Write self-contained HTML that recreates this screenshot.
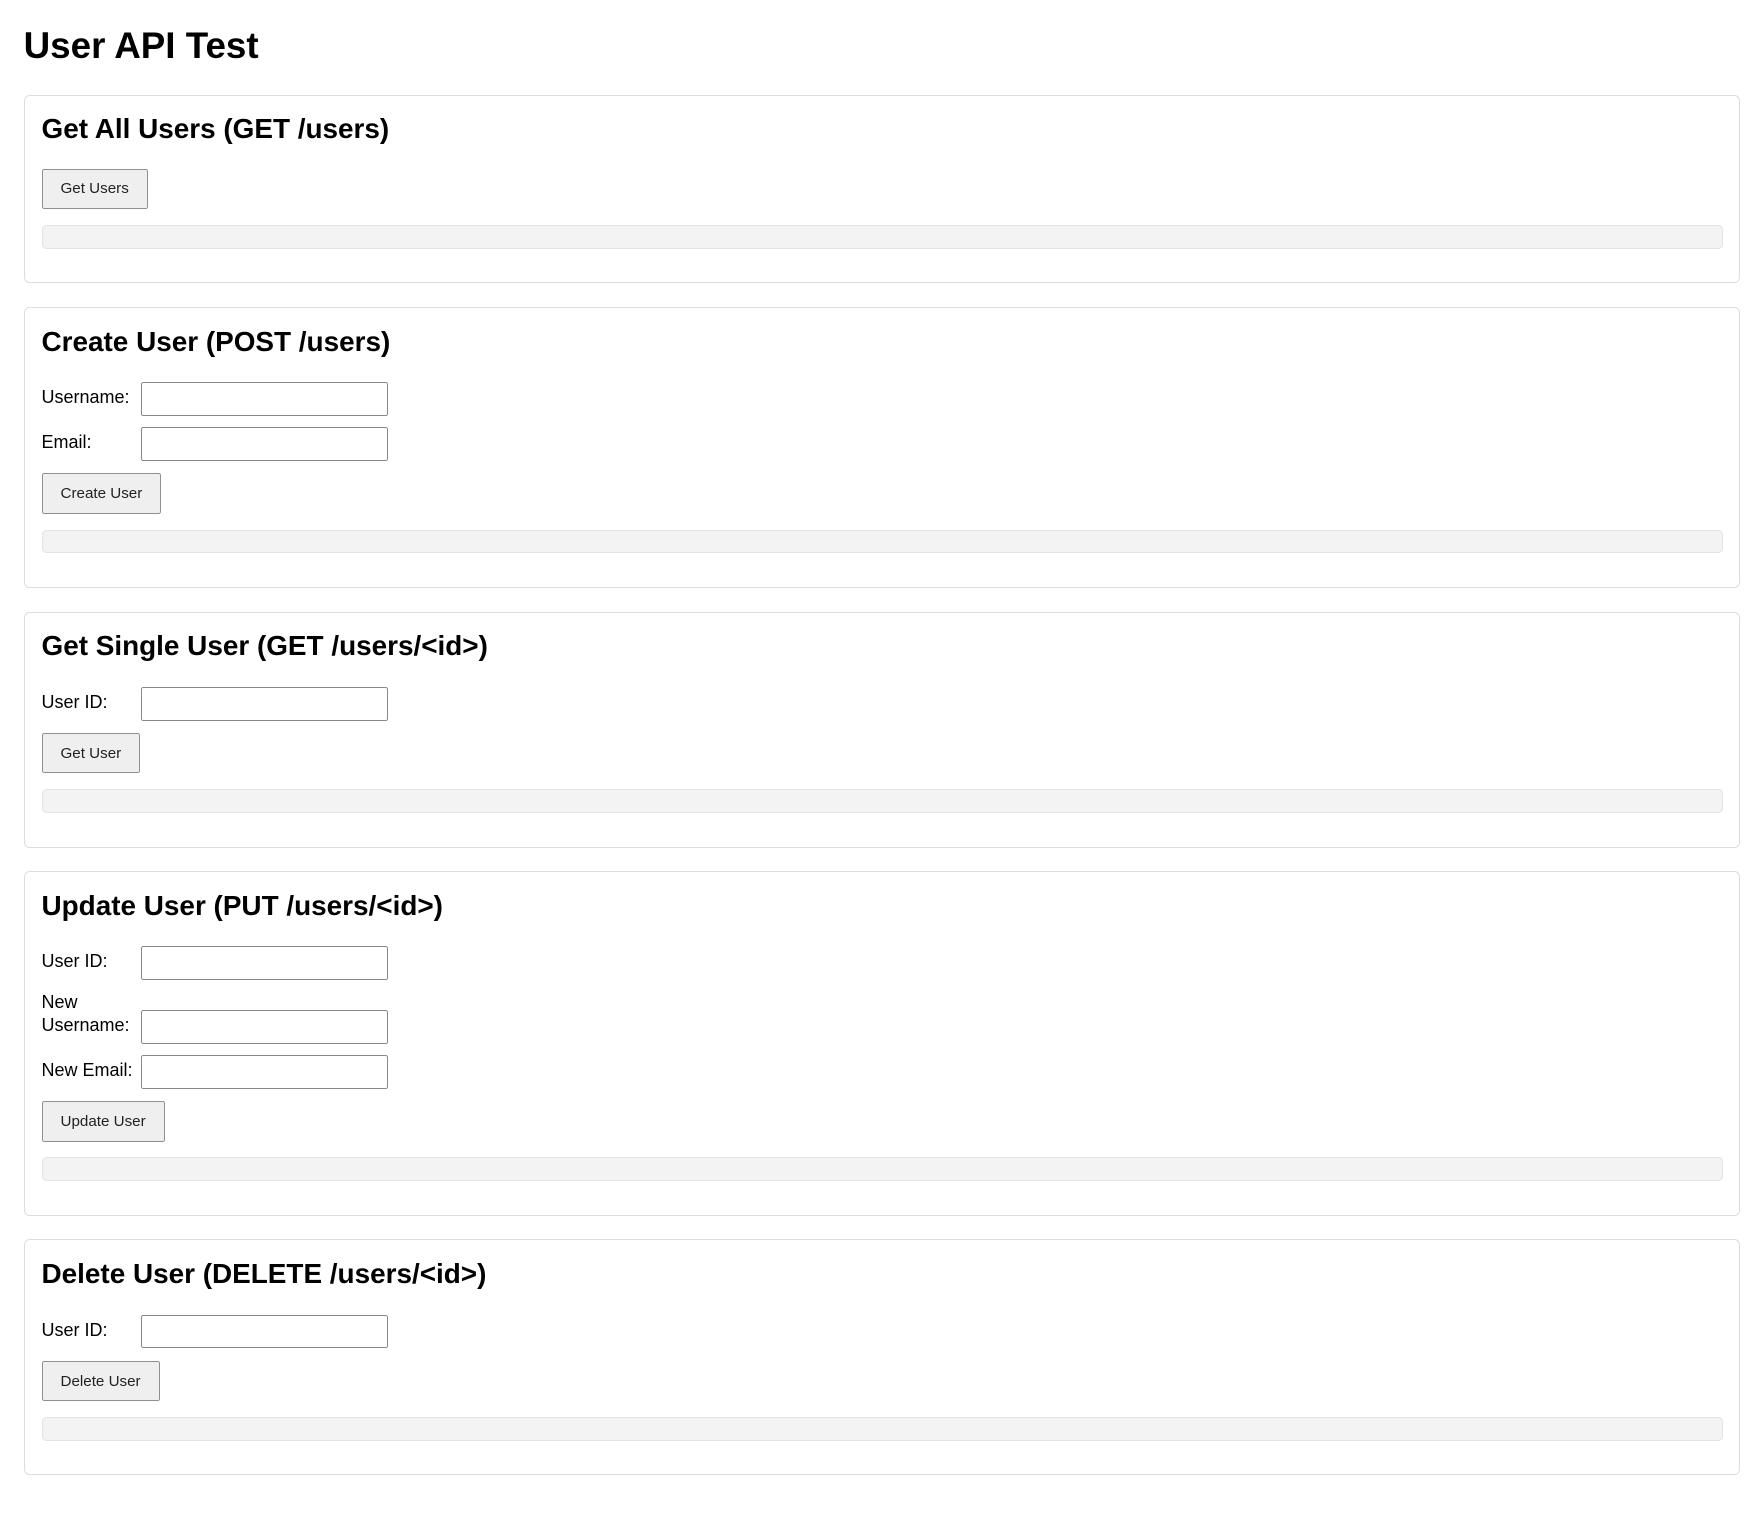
<!DOCTYPE html>
<html><head><meta charset="utf-8"><style>
html,body{margin:0;padding:0;background:#fff}
body{zoom:1.125;font-family:"Liberation Sans",Arial,sans-serif;color:#000;padding:0 20px 20px 21px;width:1526px}
h1{font-size:32.7px;margin:0;padding-top:20px;line-height:40px;height:64px}
.card{border:1px solid #ddd;border-radius:5px;padding:15px;margin-bottom:21px}
h2{font-size:24.8px;margin:0 0 21px;line-height:30px}
.row{margin-bottom:10px;font-size:16px}
.row+button{margin-top:11px}
label{display:inline-block;width:84px;margin-right:4px;line-height:20px}
input{width:220px;height:30px;box-sizing:border-box;border:1px solid #888;border-radius:2px;vertical-align:baseline;font-size:14px;padding:0 4px}
button{height:36px;padding:0 16px;background:#efefef;border:1px solid #8f8f8f;border-radius:2px;font-family:"Liberation Sans",Arial,sans-serif;font-size:13.5px;color:#222;display:block}
.first{margin-top:-1px}
.out{margin-top:14px;height:21px;box-sizing:border-box;background:#f3f3f3;border:1px solid #e3e3e3;border-radius:4px;margin-bottom:15px}
</style></head><body>
<h1>User API Test</h1>
<div class="card"><h2>Get All Users (GET /users)</h2><button class="first">Get Users</button><div class="out"></div></div>
<div class="card"><h2>Create User (POST /users)</h2>
<div class="row"><label>Username:</label><input></div>
<div class="row"><label>Email:</label><input></div>
<button>Create User</button><div class="out"></div></div>
<div class="card"><h2>Get Single User (GET /users/&lt;id&gt;)</h2>
<div class="row"><label>User ID:</label><input></div>
<button>Get User</button><div class="out"></div></div>
<div class="card"><h2>Update User (PUT /users/&lt;id&gt;)</h2>
<div class="row"><label>User ID:</label><input></div>
<div class="row"><label style="width:80px;margin-right:8px">New Username:</label><input></div>
<div class="row"><label>New Email:</label><input></div>
<button>Update User</button><div class="out"></div></div>
<div class="card"><h2>Delete User (DELETE /users/&lt;id&gt;)</h2>
<div class="row"><label>User ID:</label><input></div>
<button>Delete User</button><div class="out"></div></div>
</body></html>
